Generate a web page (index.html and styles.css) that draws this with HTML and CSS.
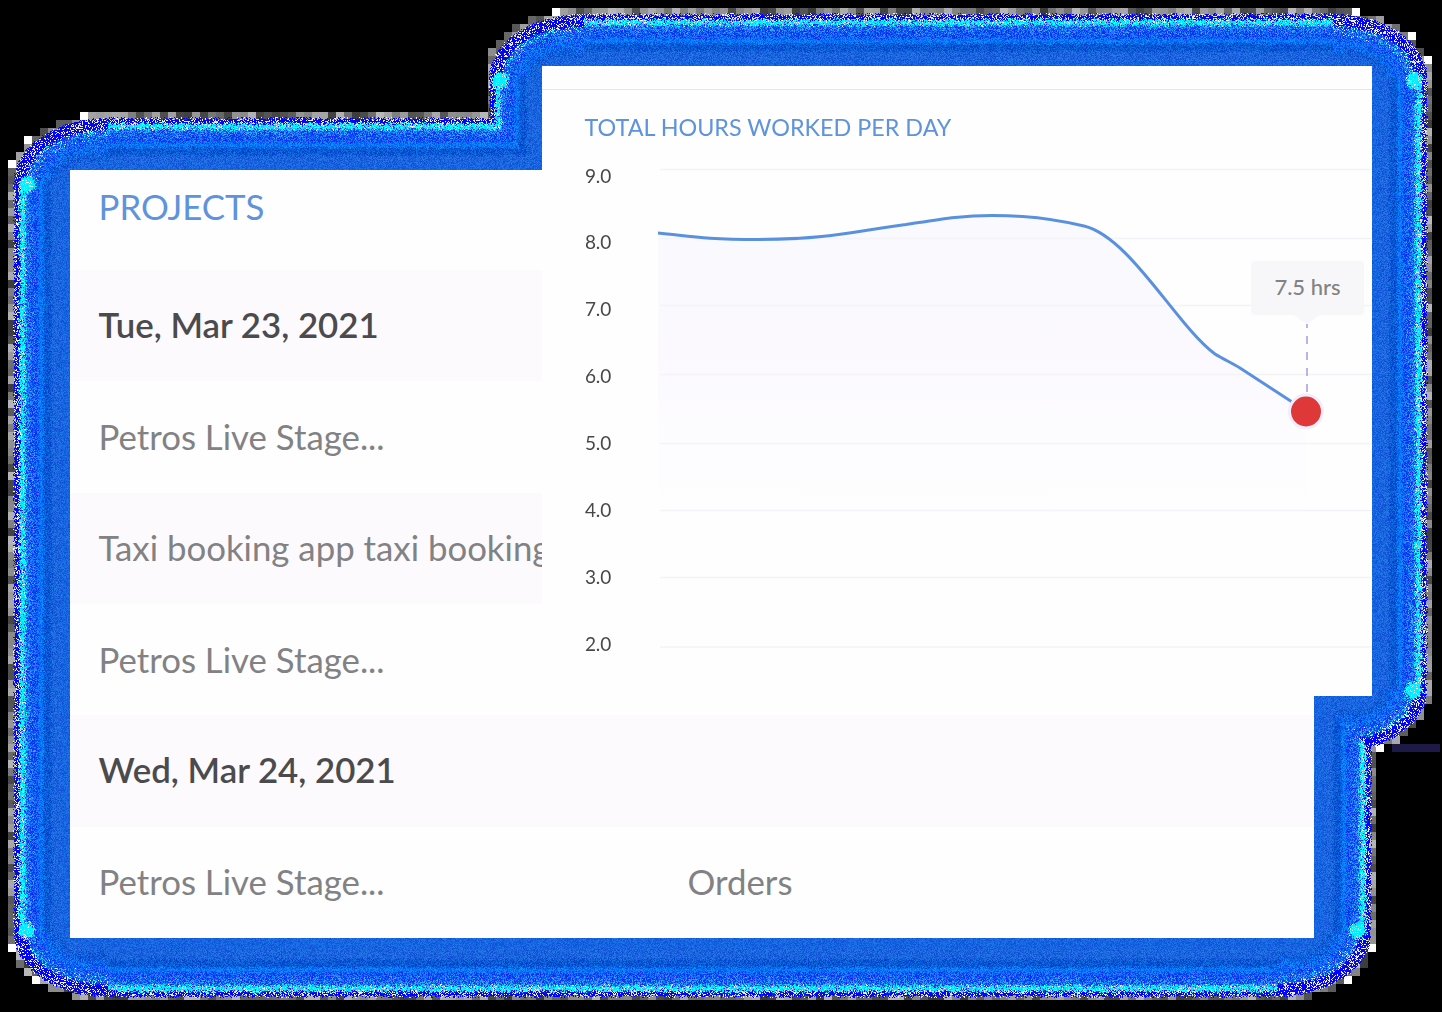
FILE: index.html
```
<!DOCTYPE html>
<html lang="en">
<head>
<meta charset="utf-8">
<title>Projects and hours</title>
<link rel="stylesheet" href="styles.css">
</head>
<body>
<main class="stage">
  <canvas class="halo" width="1442" height="1012"></canvas>
  <section class="card projects">
    <header class="projects-head">PROJECTS</header>
    <div class="row day tinted"><span>Tue, Mar 23, 2021</span></div>
    <div class="row"><span>Petros Live Stage...</span></div>
    <div class="row tinted"><span>Taxi booking app taxi booking</span></div>
    <div class="row"><span>Petros Live Stage...</span></div>
    <div class="row day tinted"><span>Wed, Mar 24, 2021</span></div>
    <div class="row"><span>Petros Live Stage...</span><span>Orders</span></div>
  </section>
  <section class="card hours">
    <div class="strip"></div>
    <h2 class="hours-title">TOTAL HOURS WORKED PER DAY</h2>
    <div class="chart">
      <div class="axis">
        <span>9.0</span><span>8.0</span><span>7.0</span><span>6.0</span><span>5.0</span><span>4.0</span><span>3.0</span><span>2.0</span>
      </div>
      <svg class="plot" viewBox="656 142 716 554" width="716" height="554">
        <defs>
          <linearGradient id="area" gradientUnits="userSpaceOnUse" x1="0" y1="215" x2="0" y2="515">
            <stop offset="0" stop-color="#faf9fe"/>
            <stop offset=".45" stop-color="#fbf9fe"/>
            <stop offset="1" stop-color="#fefefe"/>
          </linearGradient>
        </defs>
        <path fill="url(#area)" d="M658 233C690 236 702 239.500 758 239.500C830 239.500 860 230 906 224.500C942 219 961 215.500 992 215.500C1032 215.500 1060 220 1084 226C1130 237 1176 325 1215 354C1223 359 1232 363 1240 368L1306 411V515H658Z"/>
        <path class="grid" d="M660 169.500H1372M660 238.500H1372M660 305.500H1372M660 374.500H1372M660 443.500H1372M660 510.500H1372M660 577.500H1372M660 647H1372"/>
        <path class="line" d="M658 233C690 236 702 239.500 758 239.500C830 239.500 860 230 906 224.500C942 219 961 215.500 992 215.500C1032 215.500 1060 220 1084 226C1130 237 1176 325 1215 354C1223 359 1232 363 1240 368L1306 411"/>
        <path class="drop" d="M1307 324V398"/>
        <circle cx="1306" cy="411.500" r="18" fill="#f1eefc"/>
        <circle cx="1306" cy="411.500" r="15" fill="#df3838"/>
      </svg>
    </div>
    <div class="tip">7.5 hrs</div>
  </section>
</main>
<script src="halo.js"></script>
</body>
</html>
```
FILE: styles.css
```
* { box-sizing: border-box; }
body { margin: 0; background: #000; font-family: Lato, "Open Sans", sans-serif; }
.stage { position: relative; width: 1442px; height: 1012px; overflow: hidden; }
.halo { display: block; }
.card { position: absolute; background: #fefefe; overflow: hidden; }
.projects { left: 70px; top: 170px; width: 1244px; height: 768px; display: grid; grid-template-rows: 100px repeat(6, 1fr); font-size: 34.800px; color: #828284; white-space: nowrap; }
.projects-head { padding-left: 28.500px; line-height: 73px; color: #5f93db; }
.row { display: grid; grid-template-columns: 589px 1fr; align-items: center; padding-left: 28.500px; padding-bottom: 1px; }
.day { color: #4b4b4d; font-weight: 600; padding-bottom: 2px; }
.tinted { background: #fcfafd; }
.hours { left: 542px; top: 66px; width: 830px; height: 630px; }
.strip { height: 24px; border-bottom: 1.500px solid #dfe6f8; }
.hours-title { margin: 0; height: 52px; padding-left: 42.500px; font-size: 23.350px; font-weight: 400; line-height: 75px; color: #5f93db; white-space: nowrap; }
.chart { display: flex; }
.axis { width: 114px; padding: .6px 0 0 43px; display: flex; flex-direction: column; font-size: 19px; line-height: 66.860px; letter-spacing: -.150px; color: #48484a; }
.axis span { height: 66.860px; }
.plot { display: block; flex: none; }
.grid { fill: none; stroke: #f4f4f8; stroke-width: 1.500; }
.line { fill: none; stroke: #5a91de; stroke-width: 3; }
.drop { stroke: #bdb2ea; stroke-width: 2; stroke-dasharray: 8 8; stroke-dashoffset: 4; }
.tip { position: absolute; left: 709px; top: 195px; width: 113px; height: 54px; border-radius: 4px; background: #f7f7f9; color: #828284; font-size: 22px; font-weight: 500; line-height: 51px; text-align: center; }
.tip::after { content: ""; position: absolute; left: 43px; top: 54px; border: 13px solid transparent; border-top: 9px solid #f7f7f9; border-bottom: 0; }
```
FILE: halo.js
```
const canvas = document.querySelector('.halo');
const ctx = canvas.getContext('2d');
const W = canvas.width, H = canvas.height;
let seed = 20210323;
const rnd = () => {
  seed = (seed * 1664525 + 1013904223) >>> 0;
  return seed / 4294967296;
};

// Depth inside a box with elliptical corners; negative when outside.
function depth(x, y, b) {
  const rx = 95, ry = 64;
  const ex = Math.min(x - b[0], b[2] - x), ey = Math.min(y - b[1], b[3] - y);
  if (ex >= rx || ey >= ry) return Math.min(ex, ey);
  const px = rx - ex, py = ry - ey, p = Math.hypot(px, py);
  return p / Math.hypot(px / rx, py / ry) - p;
}
const back = [13, 117, 1371, 997], front = [488.500, 13, 1427, 753];
const field = (x, y) => Math.max(depth(x, y, back), depth(x, y, front));

// Coarse grey cells along the rim.
for (let y = 0; y < H; y += 8) for (let x = 0; x < W; x += 8) {
  const c = [field(x, y), field(x + 8, y), field(x, y + 8), field(x + 8, y + 8)];
  const hi = Math.max(...c);
  if (hi < .8 || Math.min(...c) > 8) continue;
  const g = hi < 1.8 ? 255 : 60 + rnd() * 125 | 0;
  ctx.fillStyle = `rgb(${g},${g},${g})`;
  ctx.fillRect(x, y, 8, 8);
}
ctx.fillStyle = '#1e1a48';
ctx.fillRect(1392, 744, 48, 8);

// Fine-grained blue bands by depth: [limit, r, g, b, grain].
const bands = [[12, 0, 240, 255, 40], [17, 22, 112, 255, 65], [25, 14, 92, 250, 50],
  [30, 6, 118, 250, 30], [38, 8, 88, 212, 28], [48, 26, 100, 222, 24], [9999, 22, 100, 224, 20]];
const nodes = [[27, 184], [500, 80], [1414, 80], [1413, 690], [1357, 930], [26, 930]];
const img = ctx.getImageData(0, 0, W, H);
for (let y = 0; y < H; y++) for (let x = 0; x < W; x++) {
  const d = field(x, y);
  if (d < 0) continue;
  const inBack = depth(x, y, back) > depth(x, y, front);
  const b = inBack ? back : front;
  const corner = Math.min(x - b[0], b[2] - x) < 95 && Math.min(y - b[1], b[3] - y) < 64;
  const e = d + (rnd() - .5) * 4, k = rnd();
  const node = nodes.some(n => Math.hypot(x - n[0], y - n[1]) < 6 + rnd() * 4);
  let c;
  if (node) {
    c = k < .15 ? [225, 255, 255] : [0, 225 + rnd() * 30, 255];
  } else if (e < (corner ? 13 : 6)) {
    if (e < 1) continue;
    c = k < .28 ? [235, 240, 255] : k < .36 ? [20, 20, 150] : [5, 5, 245];
  } else {
    const s = bands.find(v => e + (corner && d > 20 ? (rnd() - .5) * 16 : 0) < (corner ? v[0] + 5 : v[0]));
    const t = (rnd() - .5) * 2 * s[4];
    c = [s[1] + t * .5, s[2] + t, s[3] + t * .5];
    if (s[0] === 12 && k < .2) c = [220, 250, 255];
    if (s[0] === 12 && corner && k > .4) c = [20, 80, 220];
    if (d < 27 && k > .9) c = [35, 45, 235];
    if (d < 22 && k < .07) c = [75, 165, 255];
  }
  const i = (y * W + x) * 4;
  img.data[i] = c[0]; img.data[i + 1] = c[1]; img.data[i + 2] = c[2]; img.data[i + 3] = 255;
}
ctx.putImageData(img, 0, 0);
```
